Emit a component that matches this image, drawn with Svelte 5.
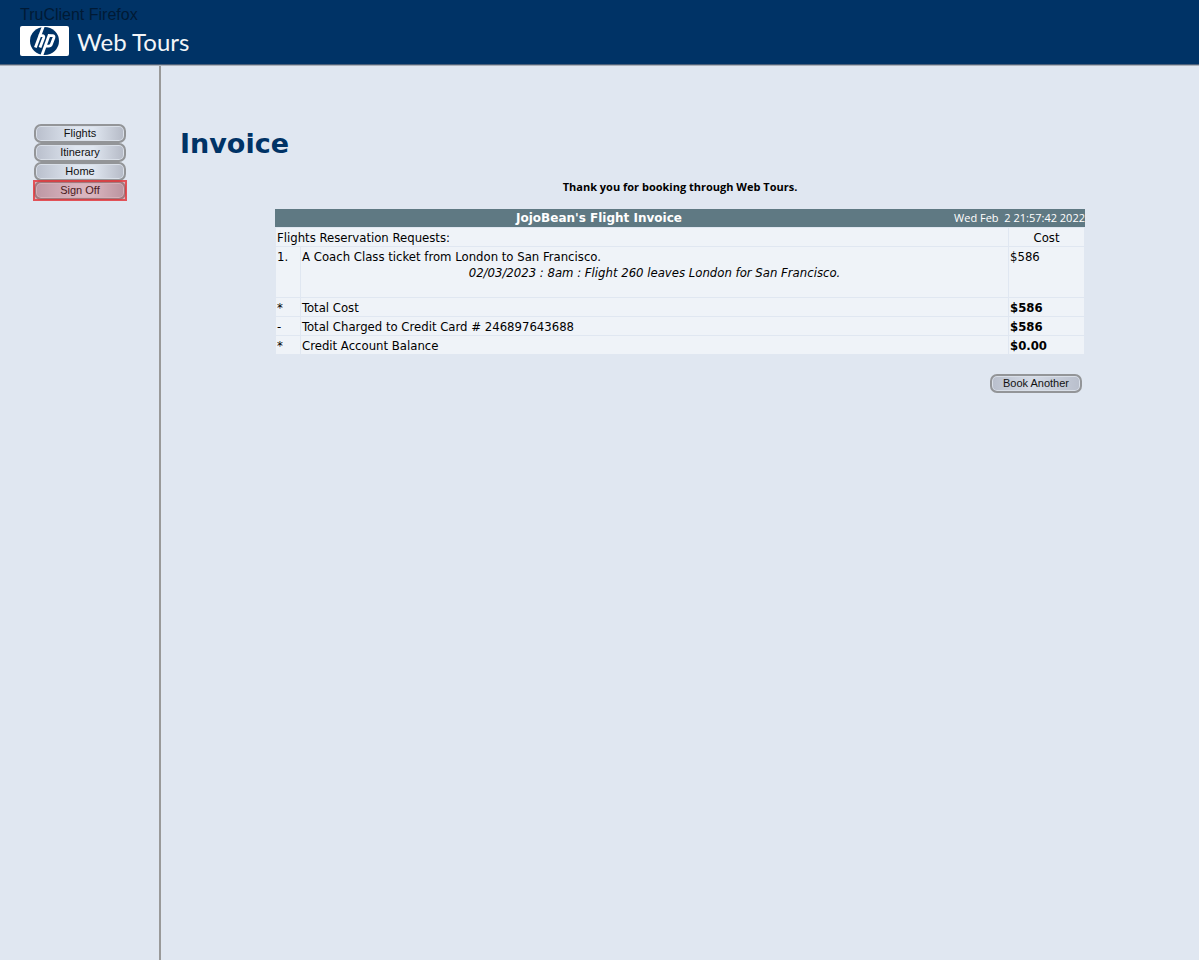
<script>
  const links = ['Flights', 'Itinerary', 'Home', 'Sign Off'];
  const totals = [
    { mark: '*', label: 'Total Cost', cost: '$586' },
    { mark: '-', label: 'Total Charged to Credit Card # 246897643688', cost: '$586' },
    { mark: '*', label: 'Credit Account Balance', cost: '$0.00' }
  ];
</script>

<div class="page">
  <header>
    <span class="client">TruClient Firefox</span>
    <div class="brand">
      <svg width="49" height="30" viewBox="0 0 49 30" role="img" aria-label="hp">
        <defs><clipPath id="disc"><ellipse cx="24.5" cy="15" rx="14.5" ry="14.5" /></clipPath></defs>
        <rect width="49" height="30" rx="2" fill="#fff" />
        <ellipse cx="24.5" cy="15" rx="14.5" ry="14" fill="#036" />
        <g clip-path="url(#disc)" fill="none" stroke="#fff" stroke-width="2.8">
          <path d="M23.8 -1 L15.4 21.5" />
          <path d="M18.8 9.7 H22.2 Q24.4 9.7 23.6 12 L20 21.5" />
          <path d="M29.4 8.4 L20.9 32" />
          <path d="M28 9.7 H32.4 Q34.6 9.7 33.8 12 L31.4 18.2 Q30.7 20.1 28.7 20.1 H25.3" />
        </g>
      </svg>
      <span class="name">Web Tours</span>
    </div>
  </header>

  <div class="columns">
    <nav>
      {#each links as link}
        <a href="#{link.replace(' ', '')}" class="pill" class:current={link === 'Sign Off'}>{link}</a>
      {/each}
    </nav>

    <main>
      <h1>Invoice</h1>
      <p class="thanks">Thank you for booking through Web Tours.</p>

      <div class="invoice">
        <div class="title">
          <h2>JojoBean's Flight Invoice</h2>
          <time>Wed Feb&nbsp; 2 21:57:42 2022</time>
        </div>
        <table>
          <colgroup><col class="mark" /><col /><col class="cost" /></colgroup>
          <thead>
            <tr><th colspan="2">Flights Reservation Requests:</th><th class="center">Cost</th></tr>
          </thead>
          <tbody>
            <tr class="ticket">
              <td>1.</td>
              <td>
                A Coach Class ticket from London to San Francisco.
                <em>02/03/2023 : 8am : Flight 260 leaves London for San Francisco.</em>
              </td>
              <td>$586</td>
            </tr>
            {#each totals as row}
              <tr><td>{row.mark}</td><td>{row.label}</td><td><b>{row.cost}</b></td></tr>
            {/each}
          </tbody>
        </table>
        <div class="actions"><button type="button" class="pill">Book Another</button></div>
      </div>
    </main>
  </div>
</div>

<style>
  :global(body) { margin: 0; background: #e0e7f1; }
  .page {
    display: flex;
    flex-direction: column;
    min-height: 100vh;
    font: 13px/16px "DejaVu Sans Condensed", Tahoma, sans-serif;
    color: #000;
  }
  header {
    box-sizing: border-box;
    min-height: 66px;
    padding: 6px 20px 0;
    background: #036;
    border-bottom: 1px solid #adb2ba;
    box-shadow: inset 0 -1px #4c617b;
  }
  .client { display: block; font: 16px/17px "Liberation Sans", Arial, sans-serif; color: #001a35; }
  .brand { display: flex; align-items: center; gap: 8px; margin-top: 3px; }
  .name { padding-top: 2px; font: 400 24px/28px Lato, sans-serif; color: #f2f5f8; }
  .columns { flex: 1; display: flex; }
  nav {
    box-sizing: border-box;
    width: 161px;
    flex: none;
    padding: 58px 34px 0;
    border-right: 2px solid #999;
  }
  .pill {
    position: relative;
    box-sizing: border-box;
    display: block;
    width: 92px;
    height: 19px;
    padding: 0;
    border: 2px solid #939598;
    border-radius: 7px;
    background: linear-gradient(90deg, #b9bfcc, #dfe6f0 45%, #dfe6f0 65%, #b5bac6);
    box-shadow: inset 0 0 0 1px #d9dfe8;
    font: 11px/15px "Liberation Sans", Arial, sans-serif;
    color: #111;
    text-align: center;
    text-decoration: none;
  }
  button.pill { background: linear-gradient(90deg, #b9bfcc, #d5dbe6 45%, #b9bfcc); }
  .current::after {
    content: "";
    position: absolute;
    inset: -3px;
    border: 2px solid rgba(228, 50, 54, 0.75);
    background: rgba(200, 50, 60, 0.28);
  }
  main { flex: 1; min-width: 0; padding: 58px 19px 20px; }
  h1 { margin: 0; font: bold 27px/40px "DejaVu Sans", Verdana, sans-serif; color: #036; }
  .thanks { margin: 15px 0 14px; text-align: center; font: bold 11px/16px "Open Sans", Tahoma, sans-serif; }
  .invoice { width: 81%; margin: 0 auto; }
  .title {
    display: grid;
    grid-template-columns: 80% 20%;
    align-items: center;
    background: #5f7983;
    color: #fff;
    line-height: 18px;
  }
  h2 { margin: 0; font: bold 12px/18px "DejaVu Sans", Verdana, sans-serif; text-align: center; }
  time { font: 11px/18px "Open Sans", Tahoma, sans-serif; text-align: right; white-space: nowrap; }
  table { width: 100%; table-layout: fixed; border-spacing: 1px; }
  .mark { width: 24px; }
  .cost { width: 75px; }
  th, td { padding: 2px 1px 0; background: #eff3f8; text-align: left; vertical-align: top; font-weight: normal; }
  th.center { text-align: center; }
  .ticket { height: 50px; }
  em { display: block; text-align: center; }
  .actions { display: flex; justify-content: flex-end; padding: 19px 3px 0; }
</style>
